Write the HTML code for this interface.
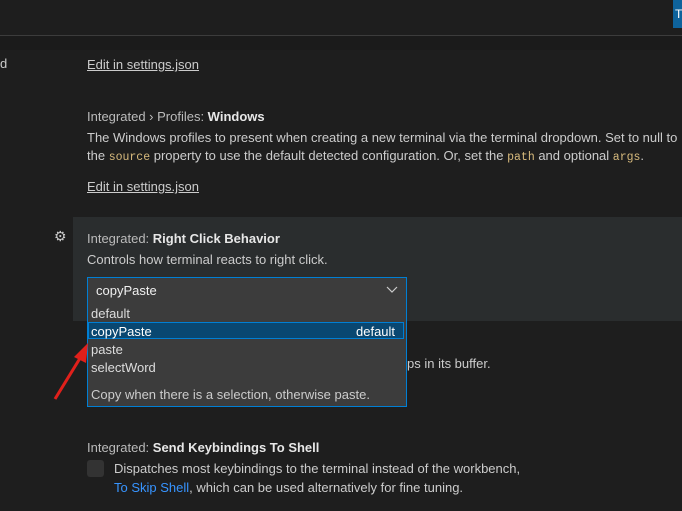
<!DOCTYPE html>
<html><head><style>
body{margin:0;width:682px;height:511px;background:#1e1e1e;font-family:"Liberation Sans",sans-serif;font-size:13px;color:#ccc;position:relative;overflow:hidden}
.a{position:absolute;white-space:nowrap}
.l{color:#ccc;text-decoration:underline}
code{font-family:"Liberation Mono",monospace;color:#d7ba7d;font-size:11.5px}
b{color:#e7e7e7}
.t{color:#bbb}
</style></head><body>
<div class="a" style="left:0;top:35px;width:682px;height:1px;background:#3c3c3c"></div>
<div class="a" style="left:0;top:36px;width:682px;height:14px;background:#1b1b1b"></div>
<div class="a" style="left:673px;top:0;width:9px;height:28px;background:#0e639c;color:#fff;font-size:12px;line-height:28px;padding-left:2px">T</div>
<div class="a" style="left:0;top:56px">d</div>
<div class="a l" style="left:87px;top:57px">Edit in settings.json</div>
<div class="a" style="left:87px;top:109px"><span class="t">Integrated › Profiles: </span><b>Windows</b></div>
<div class="a" style="left:87px;top:130px">The Windows profiles to present when creating a new terminal via the terminal dropdown. Set to null to</div>
<div class="a" style="left:87px;top:148px">the <code>source</code> property to use the default detected configuration. Or, set the <code>path</code> and optional <code>args</code>.</div>
<div class="a l" style="left:87px;top:179px">Edit in settings.json</div>
<div class="a" style="left:73px;top:217px;width:609px;height:104px;background:#2a2d2e"></div>
<div class="a" style="left:54px;top:228px;font-size:14px;color:#ccc">⚙</div>
<div class="a" style="left:87px;top:231px"><span class="t">Integrated: </span><b>Right Click Behavior</b></div>
<div class="a" style="left:87px;top:252px">Controls how terminal reacts to right click.</div>
<div class="a" style="left:87px;top:277px;width:318px;height:24px;border:1px solid #007fd4;background:#3c3c3c"></div>
<div class="a" style="left:96px;top:283px;color:#f0f0f0">copyPaste</div>
<svg class="a" style="left:385px;top:284px" width="14" height="12"><path d="M2 3l5 5 5-5" fill="none" stroke="#ccc" stroke-width="1.2"/></svg>
<div class="a" style="left:87px;top:302px;width:318px;height:104px;border:1px solid #007fd4;border-top:none;background:#3c3c3c"></div>
<div class="a" style="left:91px;top:306px;color:#ddd">default</div>
<div class="a" style="left:88px;top:322px;width:316px;height:17px;background:#094771;border:1px solid #007fd4;box-sizing:border-box"></div>
<div class="a" style="left:91px;top:324px;color:#fff">copyPaste</div>
<div class="a" style="left:356px;top:324px;color:#fff">default</div>
<div class="a" style="left:91px;top:342px;color:#ddd">paste</div>
<div class="a" style="left:91px;top:360px;color:#ddd">selectWord</div>
<div class="a" style="left:91px;top:387px;color:#ccc">Copy when there is a selection, otherwise paste.</div>
<div class="a" style="left:407px;top:356px">ps in its buffer.</div>
<svg class="a" style="left:50px;top:335px" width="45" height="70"><path d="M5 64L32 20" stroke="#e0201b" stroke-width="3"/><path d="M38 8L24 22L36 28Z" fill="#e0201b"/></svg>
<div class="a" style="left:87px;top:440px"><span class="t">Integrated: </span><b>Send Keybindings To Shell</b></div>
<div class="a" style="left:87px;top:460px;width:17px;height:17px;background:#333;border-radius:3px"></div>
<div class="a" style="left:114px;top:461px">Dispatches most keybindings to the terminal instead of the workbench,</div>
<div class="a" style="left:114px;top:480px"><span style="color:#3794ff">To Skip Shell</span>, which can be used alternatively for fine tuning.</div>
</body></html>
